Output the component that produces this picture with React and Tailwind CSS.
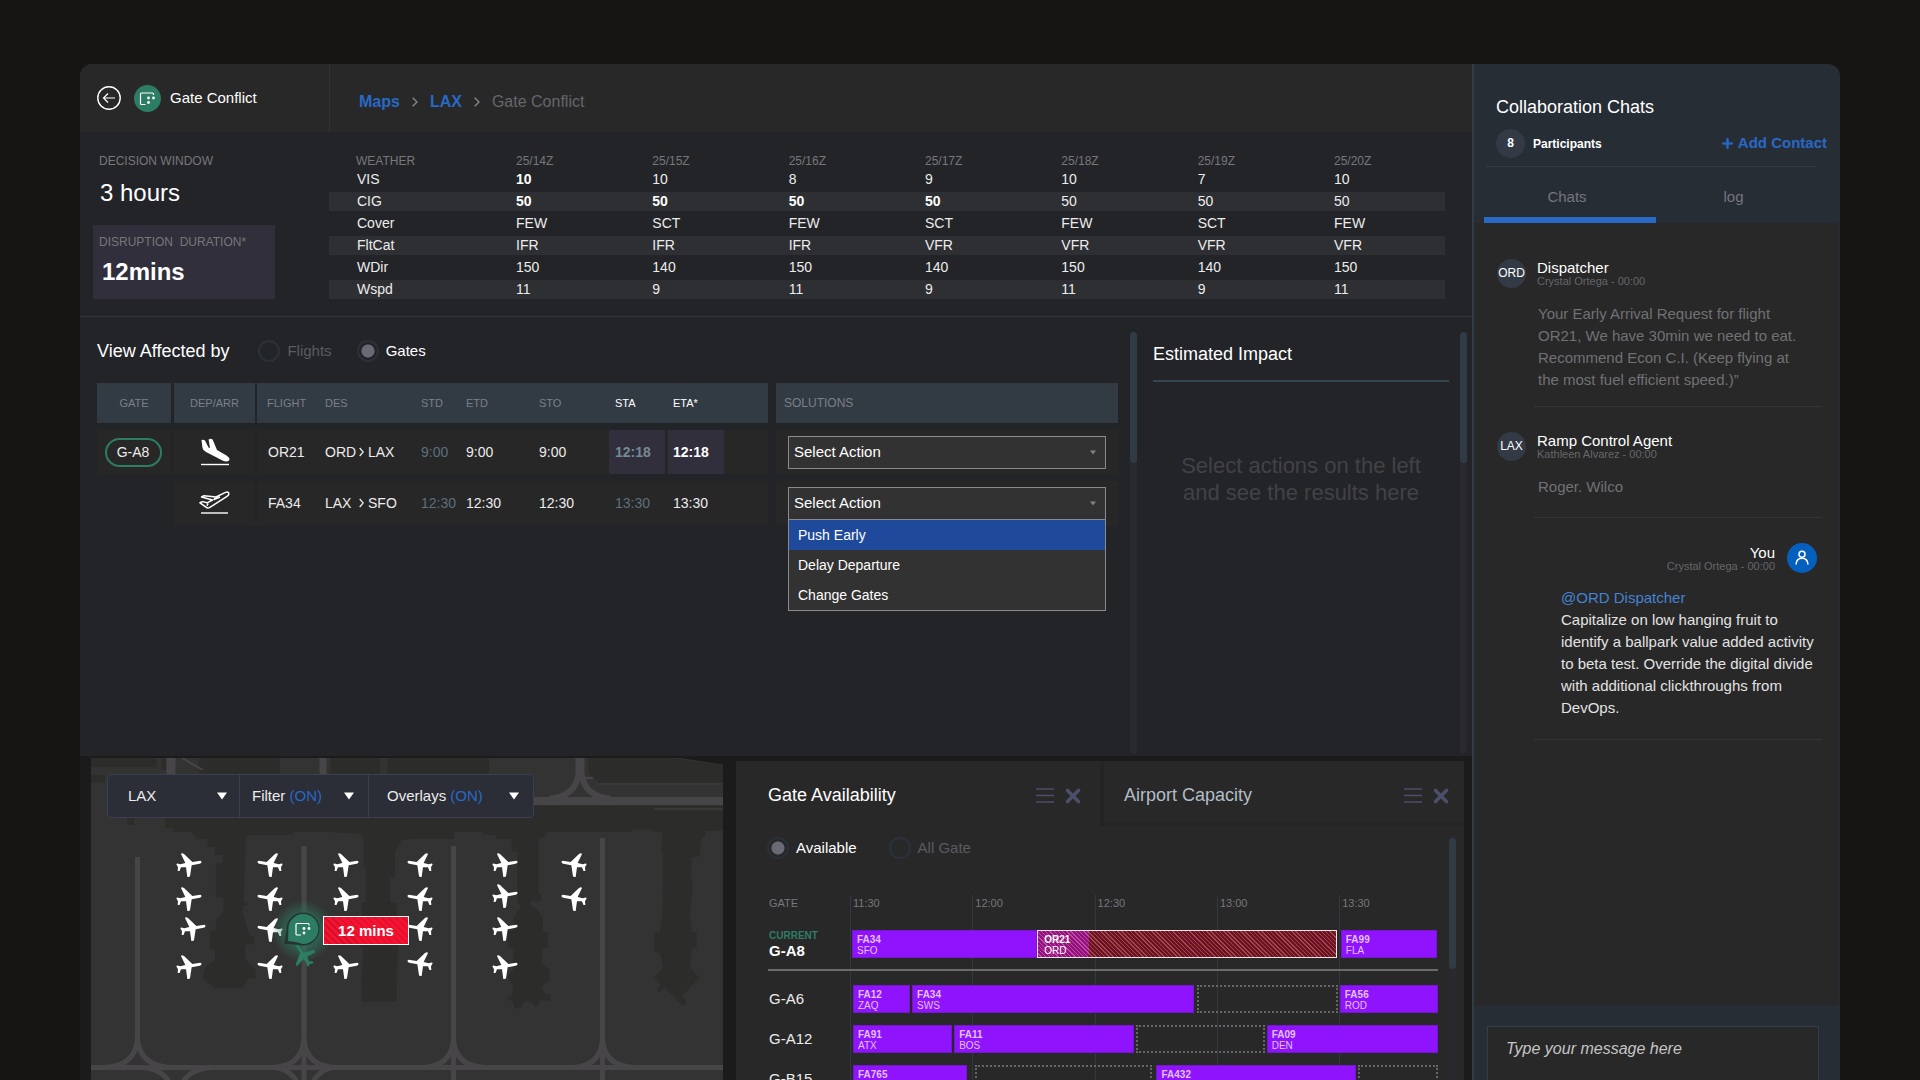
import React, { useState } from "react";
import { FaPlus } from "react-icons/fa6";
import { FiX } from "react-icons/fi";

const WEATHER_TIMES = ["25/14Z", "25/15Z", "25/16Z", "25/17Z", "25/18Z", "25/19Z", "25/20Z"];

// bold = how many leading values are highlighted
const WEATHER_ROWS = [
  { label: "VIS", values: ["10", "10", "8", "9", "10", "7", "10"], bold: 1 },
  { label: "CIG", values: ["50", "50", "50", "50", "50", "50", "50"], bold: 4 },
  { label: "Cover", values: ["FEW", "SCT", "FEW", "SCT", "FEW", "SCT", "FEW"], bold: 0 },
  { label: "FltCat", values: ["IFR", "IFR", "IFR", "VFR", "VFR", "VFR", "VFR"], bold: 0 },
  { label: "WDir", values: ["150", "140", "150", "140", "150", "140", "150"], bold: 0 },
  { label: "Wspd", values: ["11", "9", "11", "9", "11", "9", "11"], bold: 0 },
];

const ACTIONS = ["Push Early", "Delay Departure", "Change Gates"];

const TIMELINE_HOURS = ["11:30", "12:00", "12:30", "13:00", "13:30"];
const TIMELINE_SPAN = 587;

const GATE_ROWS = [
  {
    gate: "G-A6",
    slots: [
      { from: 3, to: 60, flight: "FA12", port: "ZAQ" },
      { from: 62, to: 343, flight: "FA34", port: "SWS" },
      { from: 346, to: 487, open: true },
      { from: 489, to: 587, flight: "FA56", port: "ROD" },
    ],
  },
  {
    gate: "G-A12",
    slots: [
      { from: 3, to: 102, flight: "FA91", port: "ATX" },
      { from: 104, to: 284, flight: "FA11", port: "BOS" },
      { from: 286, to: 414, open: true },
      { from: 416, to: 587, flight: "FA09", port: "DEN" },
    ],
  },
  {
    gate: "G-B15",
    slots: [
      { from: 3, to: 117, flight: "FA765", port: "TPA" },
      { from: 125, to: 302, open: true },
      { from: 306, to: 505, flight: "FA432", port: "WED" },
      { from: 507, to: 587, open: true },
    ],
  },
];

const CURRENT_SLOTS = [
  { from: 2, to: 187, flight: "FA34", port: "SFO" },
  { from: 187, to: 486, flight: "OR21", port: "ORD", conflict: true },
  { from: 490, to: 586, flight: "FA99", port: "FLA" },
];

const PLANES = [
  { x: 98, y: 107 }, { x: 98, y: 141 }, { x: 102, y: 171 }, { x: 98, y: 209 },
  { x: 179, y: 107, left: true }, { x: 179, y: 141, left: true }, { x: 179, y: 172, left: true }, { x: 179, y: 209, left: true },
  { x: 255, y: 107 }, { x: 255, y: 141 }, { x: 255, y: 209 },
  { x: 329, y: 107, left: true }, { x: 329, y: 141, left: true }, { x: 329, y: 171, left: true }, { x: 329, y: 206, left: true },
  { x: 414, y: 107 }, { x: 414, y: 138 }, { x: 414, y: 171 }, { x: 414, y: 209 },
  { x: 483, y: 107, left: true }, { x: 483, y: 141, left: true },
];

const PLANE_PATH =
  "M34 -13 Q39 -12 37 -7 Q36 -5 32 -4 L8 1 L3 34 Q2 36 -2 36 L-5 36 L-9 7 L-24 7 L-28 17 Q-29 19 -34 18 L-33 7 L-38 -2 Q-37 -5 -32 -4 L-26 -2 L-11 -6 L-24 -33 Q-22 -37 -15 -33 L10 -9 Z";

// Gate conflict symbol
const GateGlyph = () => (
  <>
    <path d="M-2 6 H-6 Q-7 6 -7 5 V-4.5 Q-7 -5.5 -6 -5.5 H5 Q6 -5.5 6 -4.5 V-3.5" fill="none" stroke="#fff" strokeWidth="1.2" />
    <circle cx="1" cy="-0.5" r="1.4" fill="#fff" />
    <circle cx="6" cy="-0.5" r="1.4" fill="#fff" />
    <circle cx="1" cy="4" r="1.4" fill="#fff" />
  </>
);

const LandingIcon = () => (
  <svg width="30" height="28" viewBox="0 0 30 28" className="mx-auto">
    <path d="M1.5 2 Q3 1.2 5 2.4 L8.5 9.5 L10 10 L8.6 1.6 Q10 .2 12.6 1.4 L17 12 L26.5 17.6 Q30.5 20.5 29 22.6 Q27 24.4 23 22.8 L6 14 Q3 12.5 2.5 10 Z" fill="#fff" />
    <path d="M1 26.5 H29" stroke="#fff" strokeWidth="1.4" />
  </svg>
);

const TakeoffIcon = () => (
  <svg width="31" height="24" viewBox="0 0 31 24" className="mx-auto">
    <path
      d="M2.5 6 L5 4.8 L17 6 L26 1.6 Q30 0 29.8 3.2 Q29.6 4.4 28 5.4 L10.5 16.6 Q8.5 17.4 7 16.2 L1 11.8 L3.5 10.6 L8 11.8 L13.5 9 Z M9 12.5 L8 14.8 M17 6.2 L15 8.6 L21 6"
      fill="none" stroke="#fff" strokeWidth="1.5" strokeLinejoin="round"
    />
    <path d="M2 22 H29" stroke="#fff" strokeWidth="1.4" />
  </svg>
);

const Caret = ({ className }) => (
  <svg viewBox="0 0 10 8" className={className}>
    <path d="M0 0.5 H10 L5 7.5 Z" fill="currentColor" />
  </svg>
);

const Radio = ({ name, value, current, onChange, label }) => (
  <label className={`flex items-center gap-[7px] text-[15px] leading-5 ${current === value ? "text-white" : "text-[#5a5a62]"}`}>
    <input
      type="radio"
      name={name}
      value={value}
      checked={current === value}
      onChange={() => onChange(value)}
      className="size-[22px] appearance-none rounded-full border-2 border-[#29323a] checked:bg-[radial-gradient(circle,#6a6a76_6px,transparent_7px)]"
    />
    {label}
  </label>
);

const ActionSelect = ({ open = false }) => (
  <div className="relative mx-3">
    <select
      aria-label="Select Action"
      defaultValue=""
      className="block h-[33px] w-full appearance-none border border-[#8a8a8d] bg-[#323232] px-[5px] text-[15px] text-white"
    >
      <option value="">Select Action</option>
      {ACTIONS.map((action) => (
        <option key={action}>{action}</option>
      ))}
    </select>
    <Caret className="pointer-events-none absolute top-3.5 right-2.5 h-[5px] w-1.5 text-[#7d838a]" />
    {open && (
      <ul role="listbox" className="absolute top-8 z-10 w-full border border-[#8a8a8d] bg-[#323232]">
        {ACTIONS.map((action, index) => (
          <li
            key={action}
            role="option"
            aria-selected={index === 0}
            className={`px-[9px] text-[14px] leading-[30px] text-white ${index === 0 ? "bg-[#1f4a9c]" : ""}`}
          >
            {action}
          </li>
        ))}
      </ul>
    )}
  </div>
);

const ScrollTrack = ({ className }) => (
  <div className={`w-[7px] rounded-full bg-[#2a2a2e] ${className}`}>
    <div className="h-[131px] rounded-full bg-[#313b45]" />
  </div>
);

const Header = () => (
  <header className="flex h-[68px] bg-[#282828]">
    <div className="flex w-[250px] items-center border-r border-[#333336] pl-[17px]">
      <button aria-label="Back" className="mr-[13px]">
        <svg width="24" height="24" viewBox="0 0 24 24" fill="none" stroke="#fff">
          <circle cx="12" cy="12" r="11.2" strokeWidth="1.4" />
          <path d="M18 12 H6.5 M11 7.5 L6.5 12 L11 16.5" strokeWidth="1.2" />
        </svg>
      </button>
      <svg width="27" height="27" viewBox="-13.5 -13.5 27 27">
        <circle r="13.5" fill="#2c7d64" />
        <GateGlyph />
      </svg>
      <h1 className="ml-[9px] text-[15px] text-white">Gate Conflict</h1>
    </div>
    <nav className="flex items-center pt-2 pl-[29px] text-[16px] text-[#66666a]">
      <a href="#maps" className="font-bold text-[#2769c5]">Maps</a>
      <Chevron />
      <a href="#lax" className="font-bold text-[#2769c5]">LAX</a>
      <Chevron />
      <span>Gate Conflict</span>
    </nav>
  </header>
);

const Chevron = () => (
  <svg width="6" height="10" viewBox="0 0 6 10" fill="none" stroke="#8a8a8e" strokeWidth="1.3" className="mx-3">
    <path d="M.7 .7 L5 5 L.7 9.3" />
  </svg>
);

const Weather = () => (
  <section className="flex h-[185px] border-b border-[#31323f]">
    <div className="w-[249px] pt-5 pl-[13px]">
      <p className="px-1.5 text-[12px] leading-[18px] text-[#77777a]">DECISION WINDOW</p>
      <p className="mt-[7px] px-[7px] text-[24px] leading-8 text-white">3 hours</p>
      <div className="mt-4 h-[74px] w-[182px] bg-[#302f3b] px-1.5 pt-2">
        <p className="text-[12px] leading-[18px] whitespace-pre text-[#77777a]">DISRUPTION  DURATION*</p>
        <p className="mt-[5px] pl-[3px] text-[24px] leading-8 font-bold text-white">12mins</p>
      </div>
    </div>
    <div className="mr-[27px] flex-1 pt-5">
      <table className="w-full table-fixed border-separate border-spacing-x-0 border-spacing-y-[3px] text-left text-[14px] text-[#ececec]">
        <colgroup>
          <col className="w-[187px]" />
          <col /><col /><col /><col /><col /><col />
          <col className="w-[111px]" />
        </colgroup>
        <thead>
          <tr className="text-[12px] leading-3 text-[#77777a]">
            <th className="pl-[27px] font-normal">WEATHER</th>
            {WEATHER_TIMES.map((time) => (
              <th key={time} className="font-normal">{time}</th>
            ))}
          </tr>
        </thead>
        <tbody>
          {WEATHER_ROWS.map((row, index) => (
            <tr key={row.label} className={`h-[19px] leading-[19px] ${index % 2 === 1 ? "bg-[#2e2f33]" : ""}`}>
              <th className="pl-7 font-normal">{row.label}</th>
              {row.values.map((value, i) => (
                <td key={i} className={i < row.bold ? "font-bold text-white" : ""}>{value}</td>
              ))}
            </tr>
          ))}
        </tbody>
      </table>
    </div>
  </section>
);

const AffectedFlights = () => {
  const [view, setView] = useState("gates");
  return (
    <div className="flex-1 pt-[22px] pl-[17px]">
      <div className="flex items-center">
        <h2 className="mr-[29px] text-[18px] leading-6 text-white">View Affected by</h2>
        <Radio name="view" value="flights" current={view} onChange={setView} label="Flights" />
        <div className="w-[25px]" />
        <Radio name="view" value="gates" current={view} onChange={setView} label="Gates" />
      </div>
      <table className="mt-[13px] w-full table-fixed border-separate border-spacing-x-0 border-spacing-y-[7px] text-left text-[14px] text-[#ececec]">
        <colgroup>
          <col className="w-[74px]" />
          <col className="w-[84px]" />
          <col className="w-[70px]" />
          <col className="w-24" />
          <col className="w-[45px]" />
          <col className="w-[73px]" />
          <col className="w-[70px]" />
          <col className="w-[59px]" />
          <col className="w-[56px]" />
          <col />
          <col className="w-[350px]" />
        </colgroup>
        <thead>
          <tr className="h-10 bg-[#323a44] text-[11px] text-[#7c7f88]">
            <th className="text-center font-normal">GATE</th>
            <th className="border-l-[3px] border-[#232428] text-center font-normal">DEP/ARR</th>
            <th className="border-l-2 border-[#232428] pl-2.5 font-normal">FLIGHT</th>
            <th className="font-normal">DES</th>
            <th className="font-normal">STD</th>
            <th className="font-normal">ETD</th>
            <th className="font-normal">STO</th>
            <th className="pl-1.5 font-normal text-white">STA</th>
            <th className="pl-[5px] font-normal text-white">ETA*</th>
            <th aria-hidden="true" />
            <th className="border-l-8 border-[#232428] pl-2 text-[12px] font-normal">SOLUTIONS</th>
          </tr>
        </thead>
        <tbody>
          <tr className="h-11">
            <td className="bg-[#272727] pr-0.5 text-center">
              <span className="inline-block h-[29px] w-[57px] rounded-full border-2 border-[#2c7d64] leading-[25px]">G-A8</span>
            </td>
            <td className="border-l-[3px] border-[#232428] bg-[#272727]"><LandingIcon /></td>
            <td className="border-l-2 border-[#232428] bg-[#272727] pl-[11px]">OR21</td>
            <td className="bg-[#272727]"><Route from="ORD" to="LAX" /></td>
            <td className="bg-[#272727] text-[#5d6f7b]">9:00</td>
            <td className="bg-[#272727]">9:00</td>
            <td className="bg-[#272727]">9:00</td>
            <td className="border-r-[3px] border-[#272727] bg-[#302f3b] pl-1.5 font-bold text-[#748995]">12:18</td>
            <td className="bg-[#302f3b] pl-[5px] font-bold text-white">12:18</td>
            <td className="bg-[#272727]" />
            <td className="border-l-8 border-[#232428] bg-[#272727]"><ActionSelect /></td>
          </tr>
          <tr className="h-11">
            <td />
            <td className="border-l-[3px] border-[#232428] bg-[#272727]"><TakeoffIcon /></td>
            <td className="border-l-2 border-[#232428] bg-[#272727] pl-[11px]">FA34</td>
            <td className="bg-[#272727]"><Route from="LAX" to="SFO" /></td>
            <td className="bg-[#272727] text-[#5d6f7b]">12:30</td>
            <td className="bg-[#272727]">12:30</td>
            <td className="bg-[#272727]">12:30</td>
            <td className="bg-[#272727] pl-1.5 text-[#5d6f7b]">13:30</td>
            <td className="bg-[#272727] pl-[5px]">13:30</td>
            <td className="bg-[#272727]" />
            <td className="border-l-8 border-[#232428] bg-[#272727]"><ActionSelect open /></td>
          </tr>
        </tbody>
      </table>
    </div>
  );
};

const Route = ({ from, to }) => (
  <span className="flex items-center">
    <span className="w-[34px]">{from}</span>
    <svg width="5" height="10" viewBox="0 0 5 10" fill="none" stroke="#ececec" strokeWidth="1.3" className="mr-1">
      <path d="M.7 1 L4.2 5 L.7 9" />
    </svg>
    {to}
  </span>
);

const EstimatedImpact = () => (
  <div className="w-[296px]">
    <h2 className="mt-[25px] border-b-2 border-[#33434f] pb-3.5 text-[18px] leading-6 text-white">Estimated Impact</h2>
    <p className="mt-[70px] text-center text-[22px] leading-[27px] text-[#414246]">
      Select actions on the left
      <br />
      and see the results here
    </p>
  </div>
);

const AirportMap = () => (
  <div className="relative overflow-hidden bg-[#333333]">
    <svg className="absolute inset-0 h-full w-full">
      <defs>
        <radialGradient id="glow">
          <stop offset="45%" stopColor="#2c7d64" stopOpacity="0.7" />
          <stop offset="100%" stopColor="#2c7d64" stopOpacity="0" />
        </radialGradient>
      </defs>

      {/* terminals */}
      <g transform="translate(-11 -18) scale(0.3333)" fill="#2c2c2a">
        <path d="M33 55 H230 V82 H33 Z M33 105 H75 V127 H33 Z M245 55 H258 V90 H245 Z M357 55 H600 V102 H357 Z M752 55 H900 V102 H752 Z M922 55 H1000 V102 H922 Z M142 233 H162 V255 H142 Z" />
        <path d="M255 233 V263 L280 265 V275 H335 L350 297 H383 V320 H405 V345 H427 V370 H408 V470 L430 475 V515 L408 540 V570 L390 575 V625 L405 630 V660 L375 680 L368 715 L405 745 H487 L505 715 H527 V690 L495 655 V615 L521 612 V590 H510 L495 540 L487 515 L492 497 L507 492 L492 485 L497 298 L507 285 H640 V275 H740 L845 282 L850 295 V375 L858 380 V485 L845 490 V540 L840 620 L850 630 L845 700 V785 H950 V700 L955 620 L950 490 L930 485 V415 L945 410 V335 L965 300 L1000 297 V233 Z" />
      </g>
      <g transform="translate(309 -18) scale(0.3333)" fill="#2c2c2a">
        <path d="M0 55 H267 V102 H0 Z M565 55 H815 L970 75 V130 H600 L565 100 Z" />
        <path d="M0 197 V297 H162 V275 H248 V285 H285 L290 297 H335 V335 H352 V485 L362 500 L342 530 L340 570 L323 575 V622 L340 628 V690 L320 710 L340 735 L335 765 L318 775 L340 785 L342 805 H362 L368 790 L380 783 L395 787 L407 800 L417 795 L420 780 L450 783 V763 L432 760 L425 740 L450 718 L448 690 L425 670 L428 625 L443 622 V577 L428 573 V535 L412 508 L393 497 V483 H422 V462 L416 458 V295 L432 292 L445 275 H695 L700 268 H755 L760 277 H787 L783 330 L788 335 V520 L780 575 L763 582 V635 L780 640 L790 682 L763 712 L783 735 L770 748 L777 758 L793 742 L850 797 L860 787 L845 768 L898 715 L870 682 L876 625 L890 624 V577 L875 573 L870 520 L877 460 V422 L873 420 L875 355 L900 345 L903 295 L915 290 L917 272 H970 V197 Z" />
        <path d="M815 50 H970 V74 Z" fill="#1b1b1b" />
      </g>

      {/* taxiways */}
      <g fill="none" stroke="#474548" strokeWidth="5">
        <path d="M46.5 99 V285 M213 88 V322 M362.5 88 V322 M511.5 80 V322 M0 309.5 H632" />
        <path d="M46.5 281 Q44 309 12 309.5 M46.5 281 Q49 309 82 309.5" />
        <path d="M213 281 Q211 309 180 309.5 M213 281 Q215 309 246 309.5" />
        <path d="M362.5 281 Q361 309 330 309.5 M362.5 281 Q364 309 396 309.5" />
        <path d="M511.5 281 Q510 309 480 309.5 M511.5 281 Q513 309 545 309.5" />
        <path d="M50 309.5 Q70 310 78 324 M124 309.5 Q100 310 92 324 M184 309.5 Q200 312 206 324 M242 309.5 Q228 312 222 324" />
        <path d="M80 0 V16 M489 0 V20" strokeWidth="9" />
        <path d="M232 0 V16" strokeWidth="7" />
        <path d="M430 43 H632" strokeWidth="8" />
        <path d="M487 18 Q484 38 458 41 M491 18 Q494 38 520 41" strokeWidth="6" />
        <path d="M91 0 L112 12" strokeWidth="2" />
        <path d="M494 20 H502" strokeWidth="2" />
        <path d="M563 51 H632 M505 26 H632" stroke="#383838" strokeWidth="2" />
      </g>

      {/* parked aircraft */}
      {PLANES.map((plane, index) => (
        <path
          key={index}
          d={PLANE_PATH}
          fill="#fff"
          transform={`translate(${plane.x} ${plane.y}) scale(${plane.left ? -0.3333 : 0.3333} 0.3333)`}
        />
      ))}

      {/* conflict marker */}
      <circle cx="212" cy="173" r="31" fill="url(#glow)" />
      <path d={PLANE_PATH} fill="#2c7d64" transform="translate(213 197) rotate(-112) scale(0.32)" />
      <path d="M195 184.5 L197 171 A15 15 0 1 1 212 186 Q204 185 195 184.5 Z" fill="#26332f" stroke="#26332f" strokeWidth="3" />
      <path d="M197 183 L197.4 171 A15 15 0 1 1 212 186 Q206 184 197 183 Z" fill="#2c7d64" />
      <g transform="translate(212 171)"><GateGlyph /></g>
    </svg>

    <div className="absolute top-[158px] left-[232px] h-[29px] w-[86px] border border-white bg-[repeating-linear-gradient(45deg,#f5112f_0_4px,#c21329_4px_5px)] text-center text-[15px] leading-[27px] font-bold text-white">
      12 mins
    </div>

    <div className="relative mt-4 ml-4 grid h-11 w-[427px] grid-cols-[131px_129px_1fr] rounded-sm border border-[#3d3e50] bg-[#2b2d37] text-[15px] text-[#ececec]">
      <button className="flex items-center justify-between pr-3 pl-5">
        LAX <Caret className="h-2 w-2.5 text-white" />
      </button>
      <button className="flex items-center justify-between border-l border-[#3d3e50] pr-3.5 pl-3">
        <span>Filter <span className="text-[#2769c5]">(ON)</span></span>
        <Caret className="h-2 w-2.5 text-white" />
      </button>
      <button className="flex items-center justify-between border-l border-[#3d3e50] pr-3.5 pl-[18px]">
        <span>Overlays <span className="text-[#2769c5]">(ON)</span></span>
        <Caret className="h-2 w-2.5 text-white" />
      </button>
    </div>
  </div>
);

const TabActions = () => (
  <div className="flex items-center gap-2 text-[#4d4e69]">
    <button aria-label="Menu">
      <svg width="18" height="15" viewBox="0 0 18 15" stroke="currentColor" strokeWidth="1.3">
        <path d="M0 1 H18 M0 7.5 H18 M0 14 H18" />
      </svg>
    </button>
    <button aria-label="Close"><FiX size={22} strokeWidth={4} /></button>
  </div>
);

const Slots = ({ slots }) => (
  <div className="flex h-7 flex-1 overflow-hidden">
    {slots.map((slot, index) => {
      const previous = index === 0 ? 0 : slots[index - 1].to;
      const style = {
        width: `${((slot.to - slot.from) / TIMELINE_SPAN) * 100}%`,
        marginLeft: `${((slot.from - previous) / TIMELINE_SPAN) * 100}%`,
      };
      if (slot.open) {
        return <div key={index} style={style} className="shrink-0 border-2 border-dotted border-[#66666a]" />;
      }
      if (slot.conflict) {
        return (
          <div key={index} style={style} className="flex shrink-0 border border-[#f0e4e6] bg-[repeating-linear-gradient(45deg,#6f1020_0_2px,#9c4a52_2px_3px)]">
            <div className="w-[51px] bg-[repeating-linear-gradient(45deg,#95107c_0_2px,#bb4fa6_2px_3px)] pt-[3px] pl-1.5 text-[10px] leading-[11px] text-white">
              <p className="font-bold">{slot.flight}</p>
              <p>{slot.port}</p>
            </div>
          </div>
        );
      }
      return (
        <div key={index} style={style} className="shrink-0 border border-[#7416cf] bg-[#9013fe] pt-[3px] pl-1 text-[10px] leading-[11px] text-[#e0c2ff]">
          <p className="font-bold">{slot.flight}</p>
          <p>{slot.port}</p>
        </div>
      );
    })}
  </div>
);

const GatePanel = () => {
  const [filter, setFilter] = useState("available");
  return (
    <div className="mt-[3px] overflow-hidden bg-[#282828]">
      <div className="flex h-[65px]">
        <div className="flex w-[364px] items-center justify-between pt-1 pr-4 pl-8">
          <h2 className="text-[18px] text-white">Gate Availability</h2>
          <TabActions />
        </div>
        <div className="flex flex-1 items-center justify-between border-b-4 border-l-4 border-[#242424] pt-2 pr-3 pl-5">
          <h2 className="text-[18px] text-[#b3bdc6]">Airport Capacity</h2>
          <TabActions />
        </div>
      </div>
      <div className="flex">
        <div className="min-w-0 flex-1 pl-8">
          <div className="-ml-px flex pt-[11px]">
            <Radio name="gates" value="available" current={filter} onChange={setFilter} label="Available" />
            <div className="w-8" />
            <Radio name="gates" value="all" current={filter} onChange={setFilter} label="All Gate" />
          </div>

          <div className="relative mt-9">
            <div className="absolute inset-0 flex pl-[82px]">
              {TIMELINE_HOURS.map((hour) => (
                <div key={hour} className="w-[20.8%] border-l border-[#2f3940] pl-0.5 text-[11px] leading-4 text-[#77777a] last:w-auto">
                  {hour}
                </div>
              ))}
            </div>
            <div className="relative">
              <p className="h-[35px] pl-px text-[11px] leading-4 text-[#77777a]">GATE</p>
              <div className="flex items-start border-b-2 border-[#6b6b6b] pb-[9px]">
                <div className="w-[82px] pl-px">
                  <p className="text-[10px] leading-3 font-bold text-[#2f7c65]">CURRENT</p>
                  <p className="text-[15px] leading-[18px] font-bold text-white">G-A8</p>
                </div>
                <Slots slots={CURRENT_SLOTS} />
              </div>
              <div className="flex flex-col gap-3 pt-3.5">
                {GATE_ROWS.map((row) => (
                  <div key={row.gate} className="flex items-center">
                    <p className="w-[82px] pl-px text-[15px] text-[#ececec]">{row.gate}</p>
                    <Slots slots={row.slots} />
                  </div>
                ))}
              </div>
            </div>
          </div>
        </div>
        <ScrollTrack className="mt-3 mr-2 ml-[11px]" />
      </div>
    </div>
  );
};

const Message = ({ avatar, name, info, children }) => (
  <article className="ml-[23px]">
    <div className="flex items-center gap-[11px] pt-[25px]">
      <div className="size-[29px] rounded-full bg-[#323b45] text-center text-[12px] leading-[29px] text-white">{avatar}</div>
      <div>
        <h3 className="text-[15px] leading-4 text-white">{name}</h3>
        <p className="text-[11px] leading-[11px] text-[#66666a]">{info}</p>
      </div>
    </div>
    <p className="mr-[17px] ml-[37px] min-h-[57px] border-b border-[#343434] py-[15px] pl-1 text-[15px] leading-[22px] whitespace-pre-line text-[#717174]">
      {children}
    </p>
  </article>
);

const ChatPanel = () => {
  const [draft, setDraft] = useState("");
  return (
    <aside className="flex w-[368px] flex-col border-l-2 border-[#303c46] bg-[#272d35]">
      <div className="h-[159px] pt-[31px]">
        <h2 className="pl-[22px] text-[18px] leading-6 text-white">Collaboration Chats</h2>
        <div className="mt-2.5 flex items-center pr-[13px] pl-[22px]">
          <span className="size-[29px] rounded-full bg-[#333a45] text-center text-[12px] leading-[29px] font-bold text-white">8</span>
          <span className="ml-2 flex-1 text-[12px] font-bold text-white">Participants</span>
          <button className="flex items-center gap-1 text-[15px] font-bold text-[#2769c5]">
            <FaPlus size={13} stroke="currentColor" strokeWidth={30} /> Add Contact
          </button>
        </div>
        <div className="mt-2 mr-6 ml-3 border-b border-[#343b45]" />
        <div role="tablist" className="mr-[11px] ml-[10px] flex h-[57px] text-[15px] text-[#74757e]">
          <button role="tab" aria-selected="true" className="w-[172px] border-b-[7px] border-[#2769c5] pt-2.5 pr-1.5">Chats</button>
          <button role="tab" aria-selected="false" className="flex-1 pt-[3px] pr-[18px]">log</button>
        </div>
      </div>

      <div className="mr-px flex-1 bg-[#282828] pt-[11px]">
        <Message avatar="ORD" name="Dispatcher" info="Crystal Ortega - 00:00">
          {"Your Early Arrival Request for flight\nOR21, We have 30min we need to eat.\nRecommend Econ C.I. (Keep flying at\nthe most fuel efficient speed.)”"}
        </Message>
        <Message avatar="LAX" name="Ramp Control Agent" info="Kathleen Alvarez - 00:00">Roger. Wilco</Message>
        <article className="mr-[17px] ml-[60px] border-b border-[#343434] pb-5">
          <div className="flex items-center justify-end gap-3 pt-[25px] pr-[5px] text-right">
            <div>
              <h3 className="text-[15px] leading-4 text-white">You</h3>
              <p className="text-[11px] leading-[11px] text-[#66666a]">Crystal Ortega - 00:00</p>
            </div>
            <svg width="30" height="30" viewBox="0 0 30 30" fill="none" stroke="#fff" strokeWidth="1.5">
              <circle cx="15" cy="15" r="15" fill="#0560bd" stroke="none" />
              <circle cx="15" cy="11.2" r="3" />
              <path d="M9 21.5 Q9.3 15.2 15 15.2 Q20.7 15.2 21 21.5" />
            </svg>
          </div>
          <p className="pt-3.5 pl-[27px] text-[15px] leading-[22px] whitespace-pre text-[#e2e2e2]">
            <a href="#dispatcher" className="text-[#4583d3]">@ORD Dispatcher</a>
            {"\nCapitalize on low hanging fruit to\nidentify a ballpark value added activity\nto beta test. Override the digital divide\nwith additional clickthroughs from\nDevOps."}
          </p>
        </article>
      </div>

      <div className="h-[75px] pt-[21px] pr-[21px] pl-[13px]">
        <textarea
          aria-label="Message"
          placeholder="Type your message here"
          value={draft}
          onChange={(e) => setDraft(e.target.value)}
          className="block h-full w-full resize-none border border-b-0 border-[#333d47] bg-[#282828] px-[18px] pt-2.5 text-[16px] leading-6 text-white italic placeholder:text-[#c4c4c4]"
        />
      </div>
    </aside>
  );
};

const App = () => (
  <div className="h-screen overflow-hidden bg-[#161513] px-20 pt-16 font-['Liberation_Sans',Arial,sans-serif]">
    <div className="flex h-full overflow-hidden rounded-t-xl bg-[#1b1b1b]">
      <main className="flex min-w-0 flex-1 flex-col">
        <div className="bg-[#232428]">
          <Header />
          <Weather />
          <section className="flex h-[439px]">
            <AffectedFlights />
            <ScrollTrack className="mt-[15px] mb-0.5 ml-3" />
            <div className="ml-4">
              <EstimatedImpact />
            </div>
            <ScrollTrack className="mt-[15px] mr-[5px] mb-0.5 ml-[11px]" />
          </section>
        </div>
        <div className="grid min-h-0 flex-1 grid-cols-[632fr_728fr] gap-[13px] pt-0.5 pr-2 pl-[11px]">
          <AirportMap />
          <GatePanel />
        </div>
      </main>
      <ChatPanel />
    </div>
  </div>
);

export default App;
